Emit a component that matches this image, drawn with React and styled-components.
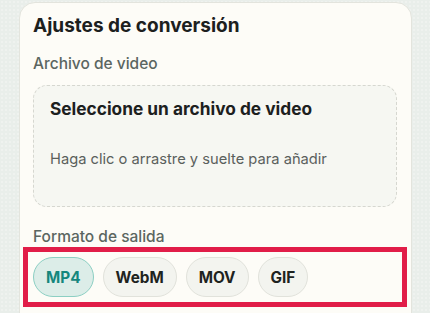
import React, { useState } from "react";
import styled, { createGlobalStyle } from "styled-components";

const Global = createGlobalStyle`
  html, body {
    margin: 0;
    padding: 0;
    background-color: #e9eeea;
    background-image: radial-gradient(rgba(255,255,255,0.55) 0.6px, transparent 0.8px);
    background-size: 4px 4px;
    font-family: Inter, "Noto Sans", "Liberation Sans", sans-serif;
    overflow: hidden;
  }
`;

const Page = styled.div`
  width: 430px;
  height: 313px;
  padding: 2px 18px 0 19px;
  box-sizing: border-box;
`;

const Card = styled.section`
  background: #fdfcf7;
  border: 1px solid #e3e4dd;
  border-radius: 16px;
  padding: 11px 14px 40px 13px;
  display: flex;
  flex-direction: column;
`;

const Title = styled.h2`
  margin: 0;
  font-size: 19px;
  line-height: 24px;
  font-weight: 700;
  color: #1c201e;
`;

const Label = styled.div`
  margin-top: ${(p) => p.$mt}px;
  font-size: 15.5px;
  line-height: 20px;
  font-weight: 500;
  color: #5b6661;
`;

const DropZone = styled.div`
  margin-top: 11px;
  border: 1px dashed #d6d7d0;
  border-radius: 14px;
  background: #f6f7f2;
  padding: 12px 16px 37px 16px;
  display: flex;
  flex-direction: column;
  cursor: pointer;
`;

const DropTitle = styled.div`
  font-size: 17.3px;
  line-height: 22px;
  font-weight: 700;
  color: #1c201e;
`;

const DropHint = styled.div`
  margin-top: 29px;
  font-size: 14.7px;
  line-height: 20px;
  font-weight: 400;
  color: #5a605c;
`;

const ChipRow = styled.div`
  margin-top: 10px;
  display: flex;
  gap: 9px;
  outline: 5px solid #e11d48;
  outline-offset: 5px;
`;

const Chip = styled.button`
  height: 40px;
  padding: 0 12px;
  border-radius: 20px;
  font-family: inherit;
  font-size: 15.3px;
  font-weight: 700;
  cursor: pointer;
  border: 1px solid ${(p) => (p.$active ? "#8ccfc3" : "#e1e2db")};
  background: ${(p) => (p.$active ? "#dcede8" : "#f3f4ef")};
  color: ${(p) => (p.$active ? "#15877d" : "#1e2320")};
`;

const formats = ["MP4", "WebM", "MOV", "GIF"];

export default function App() {
  const [fmt, setFmt] = useState("MP4");
  return (
    <>
      <Global />
      <Page>
        <Card>
          <Title>Ajustes de conversión</Title>
          <Label $mt={16}>Archivo de video</Label>
          <DropZone>
            <DropTitle>Seleccione un archivo de video</DropTitle>
            <DropHint>Haga clic o arrastre y suelte para añadir</DropHint>
          </DropZone>
          <Label $mt={20}>Formato de salida</Label>
          <ChipRow>
            {formats.map((f) => (
              <Chip key={f} $active={f === fmt} onClick={() => setFmt(f)}>
                {f}
              </Chip>
            ))}
          </ChipRow>
        </Card>
      </Page>
    </>
  );
}
